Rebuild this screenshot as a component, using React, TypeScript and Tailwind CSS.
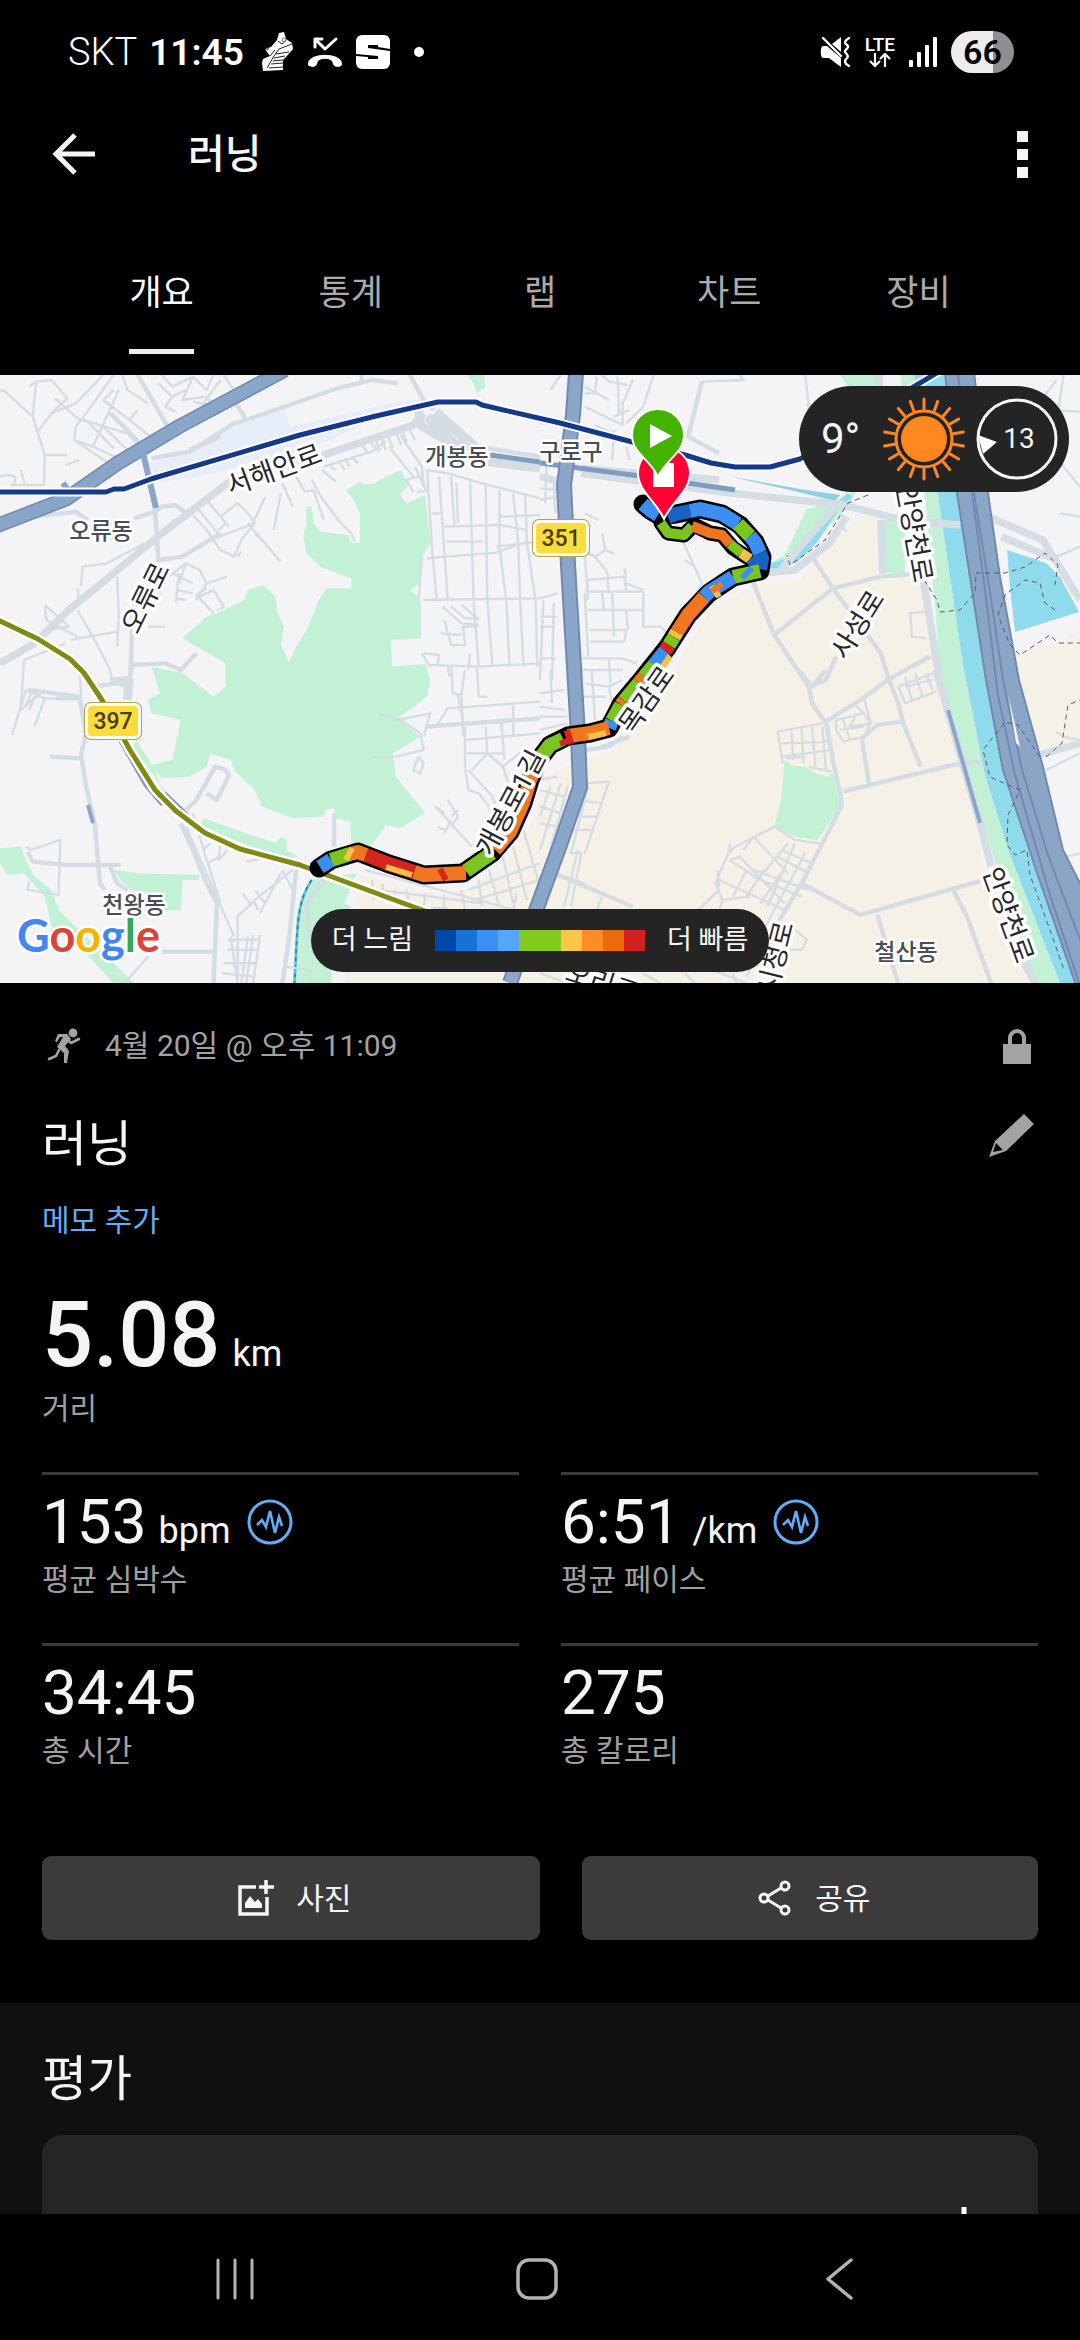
import { useState } from 'react';
import type { ReactNode } from 'react';

const TABS = ['개요', '통계', '랩', '차트', '장비'];

const PACE_SCALE = [
  'bg-[#0047a6]',
  'bg-[#1473d4]',
  'bg-[#3b90f5]',
  'bg-[#55a6ff]',
  'bg-[#82ca1e]',
  'bg-[#82ca1e]',
  'bg-[#fac74b]',
  'bg-[#ff8c26]',
  'bg-[#ed6a0c]',
  'bg-[#d42020]',
];

const BLUE = '#3b8ff2';
const NAVY = '#1763c4';
const GREEN = '#7cc51f';
const YELLOW = '#fbbf45';
const ORANGE = '#f0761f';
const RED = '#d6241f';

const ROUTE =
  'M643 129L650 135L660 141L676 139L700 134L722 139L740 150L755 167L762 182L760 196L733 202L709 218L688 240L667 273L643 303L622 328L609 353L590 358L568 361L550 370L538 386L530 405L523 428L510 457L492 478L463 498L424 500L389 489L358 477L331 485L319 493';
const LOOP = 'M661 148L668 158L684 160L694 150L710 158L722 160L733 173L750 184L757 192';

const ROUTE_SEGMENTS: [string, string][] = [
  [BLUE, 'M643 129L650 135L658 140'],
  [NAVY, 'M668 142L676 139L690 136'],
  [BLUE, 'M690 136L700 134L722 139L738 149'],
  [GREEN, 'M738 149L750 161'],
  [BLUE, 'M750 161L755 167L760 178'],
  [NAVY, 'M760 178L762 184L760 194'],
  [GREEN, 'M760 196L733 202'],
  [BLUE, 'M733 202L709 217L704 222'],
  [ORANGE, 'M704 222L688 240L677 257'],
  [YELLOW, 'M677 257L674 262'],
  [GREEN, 'M674 262L669 270'],
  [RED, 'M669 270L665 276'],
  [BLUE, 'M665 276L654 290'],
  [GREEN, 'M654 290L644 302'],
  [ORANGE, 'M644 302L639 308'],
  [GREEN, 'M639 308L624 326'],
  [ORANGE, 'M624 326L621 330'],
  [GREEN, 'M621 330L612 346'],
  [BLUE, 'M612 346L609 353'],
  [ORANGE, 'M609 353L590 358L568 361'],
  [RED, 'M572 361L566 363'],
  [GREEN, 'M563 364L550 370L538 386'],
  [ORANGE, 'M538 386L530 405L523 428L510 457L495 475'],
  [GREEN, 'M492 478L466 496'],
  [ORANGE, 'M466 498L424 500L414 497'],
  [RED, 'M414 497L389 489L366 480'],
  [ORANGE, 'M366 480L358 477L350 479'],
  [GREEN, 'M350 479L331 485'],
  [BLUE, 'M331 485L320 492'],
];

const LOOP_SEGMENTS: [string, string][] = [
  [GREEN, 'M661 148L668 158L684 160L692 151'],
  [ORANGE, 'M692 151L710 158L722 160L730 169'],
  [GREEN, 'M730 169L741 178'],
  [YELLOW, 'M741 178L750 184'],
  [NAVY, 'M750 184L757 192'],
];

// Return lane of the run, drawn on top of the outbound one
const LANE_SEGMENTS: [string, string][] = [
  [BLUE, 'M752 193L742 203'],
  [YELLOW, 'M712 211L719 222'],
  [ORANGE, 'M722 209L712 216'],
  [YELLOW, 'M670 281L660 296'],
  [ORANGE, 'M660 292L648 308'],
  [YELLOW, 'M606 358L588 362'],
  [RED, 'M572 364L560 369'],
  [YELLOW, 'M412 500L386 492'],
  [RED, 'M446 505L440 494'],
  [YELLOW, 'M352 473L346 485'],
];

const SMALL_ROADS_WEST = [
  'M0 60L15 65L95 140L130 255L128 345M95 140L105 35L85 50M105 35L150 30L195 85L150 130L110 185',
  'M160 85L225 145L370 190L400 225M300 15L220 100L150 130M330 15L250 130L220 170L215 210L330 290',
  'M215 210L270 230L345 60M270 230L345 265M250 150L330 235M300 170L370 240M330 60L300 90L450 210M400 120L375 150',
  'M355 15L370 60L430 100M460 40L500 80L480 110L510 125M470 15L500 50L560 20L530 90L600 80L640 130M500 80L540 60',
  'M560 20L600 60L620 15M0 320L20 315L45 320L42 345M60 300L72 340M128 255L195 255M190 285L230 270M30 345L128 345',
  'M590 100L640 30M560 95L600 105M650 15L690 80',
  'M560 435L600 480L640 540L680 560L700 510L740 460L720 430M570 410L640 500M600 390L665 470M640 440L690 400L720 430',
  'M610 510L740 460M720 460L815 575M740 490L770 520M690 560L700 545M655 460L635 480M770 380L730 470',
  'M815 370L795 480M820 340L850 410M860 320L885 365L910 360L940 450M905 330L935 385L975 440L1000 470L1020 490L1030 515M975 335L935 300M955 410L985 455',
  'M960 290L975 300M985 270L1000 300M1000 265L1015 290M1020 260L1040 280M940 290L1080 245L1120 215M1050 225L1070 250',
  'M1065 205L1100 245M1085 200L1105 240M1105 195L1120 240M1125 190L1140 235M1150 190L1165 225M1170 185L1180 215M1190 180L1205 210',
  'M1200 365L1180 330L1215 320M1205 290L1240 365L1210 365M1130 230L1200 320M1160 190L1205 260L1225 290L1230 350',
  'M1240 300L1255 540L1268 690M1275 320L1290 540L1300 690M1310 320L1320 470M1325 340L1330 460M1365 330L1375 690M1410 340L1415 690M1450 360L1450 530L1470 690M1490 370L1505 520L1510 690M1525 370L1530 520L1555 690',
  'M1255 430L1285 430M1290 470L1450 465L1530 480M1295 515L1400 515M1450 440L1568 435M1440 530L1568 515M1240 565L1300 560L1440 548L1500 525',
  'M1230 690L1568 685M1375 690L1390 890M1415 690L1430 890M1470 690L1480 890M1510 690L1520 890M1555 690L1560 890',
  'M1240 300L1300 310L1400 340L1568 385M1225 560L1215 690M1285 710L1340 760L1390 765M1310 710L1350 745L1390 745M1340 705L1390 750M1290 750L1310 825L1350 825L1345 770L1390 768M1280 790L1340 795',
  'M1225 850L1245 885L1390 890L1568 880M1270 885L1275 855L1230 850M1310 885L1315 970L1340 975L1350 900M1330 975L1345 1060M1365 850L1360 900M1300 890L1305 920M1385 890L1390 980L1415 980',
  'M235 650L240 590L310 580L420 520M340 620L345 740L340 830M130 705L200 770L130 780M225 655L230 700M130 710L135 750L225 800M205 810L340 785M225 720L280 820L320 900L325 930M70 870L190 820M70 870L60 1020L130 960',
  'M490 620L540 580L520 640M500 610L560 640M520 610L510 700M510 660L560 670M510 685L540 690M540 580L580 600L600 640L660 620M570 690L600 640M580 680L620 660L650 710L630 720M600 655L570 675L620 730M440 640L470 640L460 700M430 770L480 770',
  'M75 960L130 985L100 1070M90 970L75 1010M100 980L85 1020M130 985L165 985M75 960L35 1095M232 910L235 980',
  'M1100 1030L1155 1050L1250 1030M1155 1045L1220 1090L1230 1140L1150 1160L1075 1160M1230 1100L1250 1025M1215 1160L1200 1200L1220 1210L1230 1180L1215 1160',
  'M1270 1065L1300 1015L1568 995M1350 1070L1350 1190L1360 1260L1390 1270L1420 1310M1410 1070L1415 1150L1370 1200M1355 1110L1568 1090M1355 1150L1460 1150M1455 1050L1465 1170M1490 1000L1490 1100M1340 980L1345 1100M1415 1150L1460 1190L1480 1250M1360 1200L1430 1280L1440 1310M1460 1190L1520 1140',
  'M1265 1310L1370 1430M1300 1290L1330 1340L1310 1370M1330 1320L1310 1340M1265 1310L1290 1330M1270 1370L1290 1380M1290 1390L1310 1350M560 1330L600 1470M610 1420L590 1440M600 1470L640 1600M640 1420L635 1470L660 1440M540 1370L680 1700M600 1480L640 1460M700 1400L720 1410M715 1475L840 1450',
  'M850 1500L740 1590L690 1640L690 1720M815 1510L755 1630M740 1560L770 1600M705 1570L730 1610M735 1590L750 1620M820 1500L850 1560M780 1440L790 1480M670 1700L690 1840M690 1700L690 1840M720 1700L700 1840M735 1695L715 1840M755 1695L735 1840M660 1710L750 1710M660 1740L745 1740M650 1780L740 1780M645 1810L740 1820',
  'M1060 1500L1568 1640M1080 1530L1085 1590M1110 1540L1115 1595M1145 1560L1150 1600M1180 1560L1190 1610M1235 1570L1230 1620M1290 1575L1290 1620M1340 1560L1350 1620M1390 1530L1400 1610M1420 1500L1450 1610M1460 1460L1490 1600M1490 1430L1530 1590M1520 1380L1568 1550M1100 1560L1400 1600M1360 1560L1568 1480M1380 1590L1568 1530M1380 1800L1568 1780M1240 1615L1300 1615M1500 1570L1490 1620',
  'M830 1790L900 1800L900 1835M370 1830L430 1760M85 1535L80 1560L170 1575L175 1410L90 1440L75 1430',
];

const MID_ROADS_WEST = [
  'M400 15L490 175M405 220L370 180L320 130',
  'M440 265L550 245L680 160L715 150L980 55L1080 30L1155 40M1050 15L1050 35M685 100L715 150',
  'M550 240L640 200',
  'M1190 15L1230 90L1260 120',
  'M100 440L220 425L255 450M390 445L450 425L470 410L510 405L540 430L620 370L670 340M450 425L460 570L530 560L640 490',
  'M460 570L385 720L380 880L375 980M380 885L480 880L525 900L570 850',
  'M380 885L385 900M320 930L370 925L350 950',
  'M270 950L370 935M80 960L230 980L250 1090L235 1155L250 1250L275 1360L290 1540L305 1560M145 1160L240 1165M160 985L230 985',
  'M540 1320L570 1290L625 1190L655 1200L665 1215L630 1290L600 1270M525 1360L560 1440L600 1540L630 1600L620 1840',
  'M80 1445L95 1475L190 1485L350 1485M320 1490L340 1540L370 1560M860 1500L840 1700L820 1840M470 1745L620 1745M970 1330L970 1430',
  'M1235 1070L1568 1045M940 1530L890 1600L900 1710M1270 120L1390 230L1568 260',
];

const SMALL_ROADS_EAST = [
  'M130 110L240 165L240 100L270 30M165 20L160 70L130 70M180 15L200 35L255 45M130 50L200 90M225 20L230 130M215 140L260 120M60 15L30 60',
  'M330 15L300 110L250 160M250 230L260 270M215 180L210 270M160 165L230 200L310 225M360 410L380 410M0 160L50 160M20 250L15 400M0 355L50 360M40 340L45 430M0 390L50 380',
  'M130 430L170 450M180 490L190 540L160 560L130 545M160 560L190 600L200 620M190 540L215 550M130 560L140 680L130 700M140 630L250 620L245 595M245 620L250 660M195 620L200 670M130 665L300 665L300 770',
  'M0 685L50 670M10 690L0 930M40 700L35 930M0 740L50 740M0 770L45 770M0 865L45 865M130 670L140 860M140 720L300 720M180 665L185 720M210 670L215 800M145 780L250 780M250 720L255 780M145 815L245 815L250 780',
  'M295 770L350 770L370 790M100 865L240 865L280 880M110 900L240 900M200 870L205 940M0 970L70 960M0 1010L70 1020M30 900L35 1000M0 1040L80 1040M0 1080L80 1060M130 940L200 950L240 930M120 980L190 980M150 900L160 1050M200 950L215 1020L180 1050',
  'M400 480L470 640L380 800M420 570L450 590M250 640L300 660',
  'M580 15L590 30L470 35M770 15L780 100M1440 120L1568 125M1450 200L1568 350M1500 160L1520 15M870 460L890 485',
  'M1075 730L1080 800L1120 805M1070 730L1120 725M1140 860L1010 930',
  'M690 1085L820 1060M690 1085L705 1180M730 1080L735 1170M760 1075L765 1180M790 1070L800 1190M820 1070L830 1200M700 1120L840 1115M705 1160L845 1140M780 1190L845 1205M715 1165L770 1160',
  'M860 1050L940 1030L960 1060L940 1100L880 1115L860 1080L860 1050M880 1050L900 1110M920 1030L900 1070L960 1060M870 1080L940 1070M910 1000L940 1030M940 980L960 1060',
  'M1040 950L1140 910M1060 1000L1150 965M1060 920L1080 990M1090 910L1110 980M1120 910L1140 960M1040 950L1060 1000M1060 950L1140 930',
  'M550 1440L680 1370L740 1410L810 1420M550 1440L510 1540L530 1590L520 1620M555 1470L580 1460L710 1600M590 1440L620 1400L720 1510M620 1500L780 1560M550 1470L640 1530L760 1580M520 1530L710 1620M640 1520L720 1420M600 1580L650 1500M640 1600L700 1510M680 1620L770 1450M560 1580L600 1500M700 1440L790 1480M690 1460L780 1510M740 1420L660 1610M515 1500L520 1550M550 1420L555 1450M530 1590L610 1580M460 1620L520 1560',
  'M130 1240L200 1235L130 1450M110 1290L180 1300M100 1340L170 1340M90 1380L150 1380M140 1250L90 1450M30 1250L0 1340M60 1240L0 1440M80 1250L30 1440M0 1260L70 1280M0 1310L60 1330M0 1360L50 1370M50 1220L0 1230M110 1440L70 1610M85 1450L120 1450L90 1610M180 1580L165 1620M70 1520L130 1540',
  'M730 1670L775 1710L760 1740L700 1740M680 1620L650 1680M500 1800L600 1840M300 1810L350 1840M420 1810L450 1840M0 1810L80 1840M560 1810L570 1840M640 1740L600 1820',
  'M1500 1085L1520 1100L1568 1110M1470 1200L1568 1150M1530 1460L1568 1450M1500 560L1568 530M1440 110L1500 30M1510 430L1568 440',
];

const MID_ROADS_EAST = [
  'M470 35L430 200L520 250M780 100L790 150',
  'M620 640L680 795L780 950L788 990L790 1000L830 1060M680 795L850 655L790 560M850 655L990 850L1010 920L1040 1000L1055 1060L1105 1190',
  'M830 1055L930 990L1010 930L1130 860M860 860L830 930L785 950M990 620L850 655M990 620L1110 610M750 900L790 950L830 900',
  'M830 1055L850 1170L875 1290L875 1310L830 1400L760 1540L690 1660L640 1800M930 1110L980 1065L1050 1055M935 1110L955 1240',
  'M880 1265L1200 1185L1280 1175M760 1540L930 1635L1290 1530M980 1635L1010 1740L1040 1840M1200 1560L1240 1640L1310 1840',
  'M40 1510L270 1610M170 1135L260 1100M100 1145L200 1130L240 1100',
];

const MINOR_RAMPS = [
  'M0 320L55 335M120 310L560 370L880 405L1050 450L1220 465M120 295L520 330',
  'M1150 900L1280 1370L1310 1490M1400 1770L1440 1840M1110 610L1140 800L1160 930',
  'M700 600L780 500L860 410M640 610L740 600L840 520L890 440',
  'M1300 440L1460 510L1568 690M1340 500L1500 570M1450 1155L1568 1120M985 15L990 340M990 450L995 610',
];

type MapLabelProps = {
  x: number;
  y: number;
  angle?: number;
  area?: boolean;
  children: string;
};

function MapLabel({ x, y, angle = 0, area, children }: MapLabelProps) {
  return (
    <text
      x={x}
      y={y}
      transform={`rotate(${angle} ${x} ${y})`}
      textAnchor="middle"
      dominantBaseline="central"
      stroke="#ffffff"
      strokeWidth={area ? 5 : 7}
      strokeLinejoin="round"
      paintOrder="stroke"
      className={area ? 'fill-[#4a4d52] text-[23px] font-medium' : 'fill-[#25272b] text-[27px]'}
    >
      {children}
    </text>
  );
}

function RoadShield({ x, y, children }: { x: number; y: number; children: string }) {
  return (
    <g>
      <rect x={x - 29} y={y - 19} width="58" height="38" rx="7" fill="#b3a154" />
      <rect x={x - 28} y={y - 18} width="56" height="36" rx="6" fill="#fffdf0" />
      <rect x={x - 25} y={y - 15} width="50" height="30" rx="4" fill="#fddc3c" />
      <text x={x} y={y + 8} textAnchor="middle" className="fill-[#453f14] text-[23px] font-medium">
        {children}
      </text>
    </g>
  );
}

function RouteMap() {
  return (
    <svg viewBox="0 0 1080 608" className="block h-auto w-full" role="img" aria-label="경로 지도">
      <rect width="1080" height="608" fill="#f4f3f5" />

      {/* built-up area between the road and the stream */}
      <path
        fill="#f5f1e6"
        d="M871 138L840 160L800 205L755 212L712 232L680 285L655 335L610 378L585 383L548 400L530 450L505 490L465 515L424 517L360 500L345 608L1040 608L984 492L941 305L929 272L922 208L881 195L879 142Z"
      />
      <path fill="#f5f1e6" d="M1080 255L1050 272L1015 280L1020 300L1042 378L1080 368Z" />

      <g transform="matrix(.3444 0 0 .3333 0 -5)">
        <path
          fill="#c2f1d6"
          d="M1005 360L1045 335L1060 345L1090 340L1120 320L1165 300L1185 345L1160 375L1180 400L1235 375L1250 520L1225 560L1222 640L1190 660L1222 690L1222 805L1135 810L1138 890L1235 882L1250 930L1240 980L1155 1045L1220 1100L1140 1150L1150 1220L1235 1330L1160 1375L1120 1365L1090 1410L1075 1430L1020 1430L1018 1355L975 1345L970 1315L945 1320L940 1340L850 1345L760 1310L740 1260L680 1200L670 1170L610 1150L600 1190L550 1220L470 1225L440 1185L500 1170L525 1050L440 1030L430 990L465 970L440 890L530 910L620 980L655 950L655 880L530 805L600 740L630 730L710 690L720 660L765 645L800 680L805 725L825 770L815 820L838 880L860 830L890 780L915 720L925 690L950 655L1020 655L1020 625L930 590L890 550L880 500L890 460L888 410L905 410L910 460L930 485L1010 495L1020 518L1045 518L1045 430L1030 395Z"
        />
        <path
          fill="#c2f1d6"
          d="M1355 15L1405 15L1410 50L1385 70L1375 40ZM0 1435L60 1430L75 1470L100 1520L150 1560L170 1620L390 1840L330 1840L240 1740L150 1670L130 1580L70 1510L20 1515L0 1480ZM330 1500L400 1510L580 1515L575 1530L530 1530L525 1620L470 1620L440 1570L380 1560L350 1530ZM590 1345L800 1420L815 1400L835 1410L830 1440L865 1460L820 1470L580 1365ZM395 1110L450 1200L470 1260L500 1300L545 1330L470 1250L385 1130ZM900 1530L1035 1510L1000 1600L1020 1610L870 1840L860 1840L865 1640ZM860 1640L990 1600L960 1840L855 1840Z"
        />
        <path
          fill="#e8edfa"
          d="M550 245L680 165L830 115L840 170L1180 90L1230 90L1040 150L1050 170L920 225L720 290L460 340L450 310L420 280Z"
        />
        <path fill="none" stroke="#57c6dd" strokeWidth="8" d="M905 1530C860 1600 865 1660 855 1840" />
        <path fill="none" stroke="#51789c" strokeWidth="5" strokeDasharray="12 12" d="M905 1530C860 1600 865 1660 855 1840" />
      </g>

      {/* stream and its banks */}
      <path fill="#c2f1d6" d="M840 0H880L886 50L850 130L800 180L784 195L770 197L768 190L785 180L806 135L850 120Z" />
      <path fill="#f4f3f5" d="M840 0L800 0L800 118L840 118L880 60Z" />
      <path fill="#c2f1d6" d="M884 145H905V198H884Z" />
      <path
        fill="#c2f1d6"
        d="M841 0H925L938 120L963 290L985 400L1010 480L1060 608H1036L1010 540L990 470L960 380L941 305L935 230L925 120L900 0Z"
      />
      <path fill="#90daee" d="M914 0H946L958 120L986 290L1004 400L1030 480L1076 608H1060L1010 480L985 400L963 290L938 120Z" />
      <path fill="#90daee" d="M1007 175L1046 188L1060 202L1079 237L1015 257L1010 212Z" />
      <path fill="none" stroke="#90daee" strokeWidth="6" d="M768 192L795 185L815 165L838 130L850 120" />
      <path fill="#90cfe0" d="M728 101L800 114L840 120L835 126L790 115Z" />

      <g transform="matrix(.3444 0 0 .3333 540 -5)">
        <path
          fill="#c2f1d6"
          d="M710 1170L730 1185L770 1190L800 1210L835 1220L850 1210L870 1300L865 1320L805 1410L740 1400L680 1370L700 1290Z"
        />
      </g>

      <g transform="matrix(.3444 0 0 .3333 0 -5)" fill="none" stroke="#d4dde4" strokeLinejoin="round">
        <g strokeWidth="7">
          {SMALL_ROADS_WEST.map((d) => (
            <path key={d} d={d} />
          ))}
        </g>
        <g strokeWidth="13">
          {MID_ROADS_WEST.map((d) => (
            <path key={d} d={d} />
          ))}
        </g>
        <path strokeWidth="22" d="M0 880L100 820L200 720L330 610L470 490L560 420L660 340L940 255L1200 165L1230 130" />
        <path strokeWidth="26" d="M1215 110L1220 165L1300 215L1400 240M1240 140L1330 230M1260 130L1360 215M1370 270L1568 295M375 925L370 990" />
      </g>

      <g transform="matrix(.3444 0 0 .3333 540 -5)" fill="none" stroke="#d4dde4" strokeLinejoin="round">
        <g strokeWidth="7">
          {SMALL_ROADS_EAST.map((d) => (
            <path key={d} d={d} />
          ))}
        </g>
        <g strokeWidth="13">
          {MID_ROADS_EAST.map((d) => (
            <path key={d} d={d} />
          ))}
        </g>
        <g strokeWidth="22" stroke="#d6dee5">
          {MINOR_RAMPS.map((d) => (
            <path key={d} d={d} />
          ))}
        </g>
      </g>

      {/* highways */}
      <g fill="none" strokeLinejoin="round">
        <path stroke="#7089b3" strokeWidth="15" d="M-4 151L66 124L118 88L180 51L285 -5" />
        <path stroke="#89a6c8" strokeWidth="12" d="M-4 151L66 124L118 88L180 51L285 -5" />
        <path stroke="#89a6c8" strokeWidth="6" d="M143 78L156 133M63 108L70 118" />
        <path stroke="#7f9cc2" strokeWidth="5" d="M490 80L540 87M540 88L640 101L735 115" />
        <path stroke="#7089b3" strokeWidth="16" d="M576 -2L573 40L564 110L568 190L578 360L580 412L560 470L538 530L510 608" />
        <path stroke="#8ba6c8" strokeWidth="12" d="M576 -2L573 40L564 110L568 190L578 360L580 412L560 470L538 530L510 608" />
        <path stroke="#8ba6c8" strokeWidth="4" d="M948 335L980 448M88 430L93 448" />
        <path stroke="#7e94bb" strokeWidth="3" d="M120 366L145 410L162 430M165 418L188 440" />
      </g>
      <path
        fill="#8ba5c6"
        stroke="#7089b3"
        strokeWidth="2"
        d="M945 -3L957 118L986 305L1003 395L1036 495L1076 610H1082V512L1063 475L1043 392L1019 305L1000 202L988 118L974 -3Z"
      />
      <path
        fill="none"
        stroke="#7289b3"
        strokeWidth="2"
        d="M958 0L974 118L992 230L1003 305L1022 395L1048 480L1082 570M972 118L985 215L998 320L1015 400L1050 520L1079 608"
      />
      <path fill="#f4f3f5" d="M1008 320L1014 345L1020 372L1016 368Z" />
      <path
        fill="none"
        stroke="#575d66"
        strokeWidth="1"
        strokeDasharray="5 4"
        d="M868 120L848 128L825 165L790 190L787 180M924 205L937 225L940 237L960 235L975 218L976 198L1005 198L1025 192L1045 178L1058 190L1055 210M1055 235L1045 228L1040 208L1025 205L1005 220L998 240L1010 270L1020 280L1050 260L1058 268L1080 268M1046 382L1062 368L1068 330L1080 325M1040 382L1018 350L1005 347L983 375L990 402L1020 415L1008 440L1007 470L1015 480L1027 475L1030 500L1050 555L1064 595"
      />

      {/* rail lines */}
      <g fill="none" strokeLinejoin="round">
        <path
          stroke="#ffffff"
          strokeWidth="9"
          d="M0 117H106L114 114H124L151 104L300 60L376 41L438 27H476L482 30L560 48L640 69L685 80L711 88L735 92H770L800 84L900 20L950 -10"
        />
        <path
          stroke="#15398a"
          strokeWidth="5"
          d="M0 117H106L114 114H124L151 104L300 60L376 41L438 27H476L482 30L560 48L640 69L685 80L711 88L735 92H770L800 84L900 20L950 -10"
        />
        <path
          stroke="#ffffff"
          strokeWidth="10"
          d="M-4 244L38 264L70 284L84 298L102 325L130 375L155 415L176 436L205 458L240 474L300 490L400 527L450 545"
        />
        <path
          stroke="#7f8a12"
          strokeWidth="5"
          d="M-4 244L38 264L70 284L84 298L102 325L130 375L155 415L176 436L205 458L240 474L300 490L400 527L450 545"
        />
      </g>

      {/* recorded route, coloured by pace */}
      <g fill="none" strokeLinejoin="round">
        <g stroke="#000000" strokeLinecap="round">
          <path d={ROUTE} strokeWidth="19" />
          <path d={LOOP} strokeWidth="15" />
        </g>
        <g strokeWidth="10">
          {LOOP_SEGMENTS.map(([color, d]) => (
            <path key={d} d={d} stroke={color} />
          ))}
        </g>
        <g strokeWidth="14">
          {ROUTE_SEGMENTS.map(([color, d]) => (
            <path key={d} d={d} stroke={color} />
          ))}
        </g>
        <g strokeWidth="6">
          {LANE_SEGMENTS.map(([color, d]) => (
            <path key={d} d={d} stroke={color} />
          ))}
        </g>
      </g>

      <MapLabel x={274} y={95} angle={-20}>서해안로</MapLabel>
      <MapLabel x={146} y={223} angle={-64}>오류로</MapLabel>
      <MapLabel x={511} y={428} angle={-62}>개봉로1길</MapLabel>
      <MapLabel x={647} y={325} angle={-55}>목감로</MapLabel>
      <MapLabel x={858} y={250} angle={-58}>사성로</MapLabel>
      <MapLabel x={914} y={158} angle={80}>안양천로</MapLabel>
      <MapLabel x={1008} y={540} angle={70}>안양천로</MapLabel>
      <MapLabel x={776} y={583} angle={-76}>시청로</MapLabel>
      <MapLabel x={602} y={608} angle={18}>오리로</MapLabel>
      <MapLabel x={457} y={82} area>개봉동</MapLabel>
      <MapLabel x={571} y={77} area>구로구</MapLabel>
      <MapLabel x={101} y={156} area>오류동</MapLabel>
      <MapLabel x={134} y={530} area>천왕동</MapLabel>
      <MapLabel x={906} y={577} area>철산동</MapLabel>
      <RoadShield x={113} y={346}>397</RoadShield>
      <RoadShield x={561} y={163}>351</RoadShield>

      {/* finish and start pins */}
      <path
        fill="#ff0033"
        stroke="#ffffff"
        strokeWidth="2"
        d="M664 144C656 126 638 116 638 98A26 26 0 0 1 690 98C690 116 672 126 664 144Z"
      />
      <path fill="#ffffff" d="M653 88H674V112H653Z" />
      <path
        fill="#43b300"
        stroke="#ffffff"
        strokeWidth="2"
        d="M658 102C650 84 632 78 632 60A26 26 0 0 1 684 60C684 78 666 84 658 102Z"
      />
      <path fill="#ffffff" d="M650 49L672 61L650 73Z" />

      <text
        x="17"
        y="577"
        stroke="#ffffff"
        strokeWidth="5"
        strokeLinejoin="round"
        paintOrder="stroke"
        className="font-['Lato',sans-serif] text-[45px] font-bold"
      >
        <tspan fill="#4285f4">G</tspan>
        <tspan fill="#db4437">o</tspan>
        <tspan fill="#f4b400">o</tspan>
        <tspan fill="#4285f4">g</tspan>
        <tspan fill="#34a853">l</tspan>
        <tspan fill="#db4437">e</tspan>
      </text>
    </svg>
  );
}

function SunIcon() {
  return (
    <svg width="86" height="86" viewBox="-43 -43 86 86" stroke="#ff871f" strokeWidth="3" strokeLinecap="round">
      <circle r="23" fill="#ff871f" stroke="none" />
      <circle r="28" fill="none" />
      {Array.from({ length: 18 }, (_, i) => (
        <path key={i} d="M0 -30V-40" transform={`rotate(${i * 20})`} />
      ))}
    </svg>
  );
}

function WeatherPill() {
  return (
    <div className="absolute top-[11px] right-[11px] flex h-[106px] items-center rounded-full bg-[#242424] pr-[11px] pl-[22px] text-[#f5f5f5]">
      <span className="w-[60px] text-[42px] leading-none">9°</span>
      <SunIcon />
      <div className="relative ml-[9px] flex size-[82px] items-center justify-center">
        <svg className="absolute inset-0" width="82" height="82" viewBox="0 0 82 82">
          <circle cx="41" cy="41" r="39" fill="none" stroke="#f5f5f5" strokeWidth="3" />
          <path d="M2 37L21 44L7 56Z" fill="#ffffff" />
        </svg>
        <span className="pl-1 text-[28px] leading-none">13</span>
      </div>
    </div>
  );
}

function PaceLegend() {
  return (
    <div className="absolute inset-x-0 bottom-[11px] flex justify-center">
      <div className="flex h-[63px] items-center gap-[22px] rounded-full bg-[#242424] px-[21px] text-[27px] text-[#f5f5f5]">
        <span>더 느림</span>
        <div className="flex">
          {PACE_SCALE.map((color, i) => (
            <span key={i} className={`size-[21px] ${color}`} />
          ))}
        </div>
        <span>더 빠름</span>
      </div>
    </div>
  );
}

function StatusBar() {
  return (
    <div className="flex h-[104px] shrink-0 items-center justify-between pr-[66px] pl-[68px] text-white">
      <div className="flex items-center gap-3">
        <span className="text-[38px] leading-none font-light">SKT</span>
        <span className="text-[37px] leading-none font-semibold">11:45</span>
        <div className="ml-[6px] flex items-center gap-[13px]">
          <svg width="32" height="40" viewBox="0 0 32 40">
            <path fill="#ffffff" d="M17 1L22 0L24 7L30 11L31 17L24 25L21 28L21 38L1 39L0 31L1 27L8 24L5 20L3 17L9 15L15 8Z" />
            <path fill="none" stroke="#222222" d="M5 36L12 24L17 17L30 12M14 22L27 20M12 26L23 24M11 29L21 28M9 32L21 31M7 36L21 35M16 9L20 12L24 8M3 17L7 17M8 24L13 18" />
            <circle cx="22" cy="8" r="2" fill="none" stroke="#777777" />
          </svg>
          <svg width="36" height="32" viewBox="0 0 36 32">
            <path fill="none" stroke="#ffffff" strokeWidth="3" strokeLinecap="round" strokeLinejoin="round" d="M8 11V3H15M8 3L18 13L29 3" />
            <path fill="#ffffff" d="M1 27C3 16 33 16 35 27C36 32 27 32 26 28L25 25C21 22 15 22 11 25L10 28C9 32 0 32 1 27Z" />
          </svg>
          <svg width="34" height="34" viewBox="0 0 34 34">
            <rect width="34" height="34" rx="6" fill="#ffffff" />
            <path fill="#000000" d="M12 10H22V12L34 14V16L12 13ZM0 19L22 21V24H12V22L0 21Z" />
          </svg>
        </div>
        <span className="ml-3 size-[10px] rounded-full bg-white" />
      </div>

      <div className="flex items-center gap-[14px]">
        <svg width="32" height="32" viewBox="0 0 32 32">
          <path fill="#ffffff" d="M4 10H8L22 22V31L10 22H4C1 22 1 10 4 10ZM13 8L22 1V16Z" />
          <path fill="none" stroke="#ffffff" strokeWidth="2.4" strokeLinecap="round" d="M4 2L22 20M30 2C25 5 25 7 28 9C31 11 27 13 26 15C25 17 31 19 28 22C25 25 25 27 30 30" />
        </svg>
        <div className="flex flex-col items-center">
          <span className="text-[19px] leading-4 font-medium">LTE</span>
          <svg width="24" height="15" viewBox="0 0 24 15" fill="none" stroke="#ffffff" strokeWidth="2.2">
            <path d="M7 0V12M2 8L7 13L12 8M17 14V2M12 6L17 1L22 6" />
          </svg>
        </div>
        <svg width="28" height="30" viewBox="0 0 28 30" fill="#ffffff">
          <rect y="23" width="4" height="7" rx="1" />
          <rect x="8" y="15" width="4" height="15" rx="1" />
          <rect x="16" y="8" width="4" height="22" rx="1" />
          <rect x="24" width="4" height="30" rx="1" />
        </svg>
        <span className="flex h-[42px] w-[63px] items-center justify-center rounded-full bg-linear-to-r from-[#ededed] from-66% to-[#8f8f8f] to-66% text-[34px] leading-none font-semibold text-black">
          66
        </span>
      </div>
    </div>
  );
}

function Header() {
  return (
    <header className="flex h-[100px] shrink-0 items-center pr-[46px] pl-[48px] text-[#f5f5f5]">
      <button type="button" aria-label="뒤로" className="w-[140px]">
        <svg width="48" height="48" viewBox="0 0 48 48" fill="none" stroke="currentColor" strokeWidth="5">
          <path d="M47 24H8M27 5L8 24L27 43" />
        </svg>
      </button>
      <h1 className="flex-1 pt-[2px] text-[40px] leading-none font-medium">러닝</h1>
      <button type="button" aria-label="더보기" className="flex flex-col gap-[7px] px-[6px]">
        <span className="size-[11px] bg-current" />
        <span className="size-[11px] bg-current" />
        <span className="size-[11px] bg-current" />
      </button>
    </header>
  );
}

function Tabs() {
  const [active, setActive] = useState('개요');
  return (
    <nav className="grid h-[171px] shrink-0 grid-cols-5 items-end px-[67px] pb-[21px]">
      {TABS.map((tab) => (
        <button key={tab} type="button" onClick={() => setActive(tab)} className="flex justify-center">
          <span
            className={`border-b-[5px] pb-[35px] text-[35px] leading-10 ${
              tab === active ? 'border-[#f0f0f0] text-white' : 'border-transparent text-[#ababab]'
            }`}
          >
            {tab}
          </span>
        </button>
      ))}
    </nav>
  );
}

function PulseIcon() {
  return (
    <svg width="46" height="46" viewBox="0 0 46 46" fill="none" stroke="#62abf5">
      <circle cx="23" cy="23" r="21" strokeWidth="3" />
      <path strokeWidth="2.6" d="M10 26L15 21L19 28L23 12L28 34L32 18L35 27" />
    </svg>
  );
}

type StatProps = {
  value: string;
  unit?: string;
  label: string;
  pulse?: boolean;
};

function Stat({ value, unit, label, pulse }: StatProps) {
  return (
    <div className="border-t-[3px] border-[#3a3a3a] pt-[11px] pb-[43px]">
      <div className="flex items-center">
        <p className="text-[62px] leading-[72px] text-[#f5f5f5]">
          {value}
          {unit && <span className="ml-3 text-[36px] leading-none">{unit}</span>}
        </p>
        {pulse && (
          <button type="button" aria-label={`${label} 차트`} className="ml-4">
            <PulseIcon />
          </button>
        )}
      </div>
      <p className="mt-[2px] text-[30px] leading-10 text-[#a0a0a0]">{label}</p>
    </div>
  );
}

function ActionButton({ icon, children }: { icon: ReactNode; children: string }) {
  return (
    <button
      type="button"
      className="flex h-[84px] items-center justify-center gap-[22px] rounded-[9px] bg-[#3b3b3b] pl-2 text-[30px] text-[#f5f5f5]"
    >
      {icon}
      {children}
    </button>
  );
}

function ActivitySummary() {
  return (
    <section className="px-[42px] pt-[43px] pb-[63px]">
      <div className="flex h-10 items-center text-[#a3a3a3]">
        <svg width="42" height="40" viewBox="0 0 42 40" fill="none" stroke="currentColor" strokeLinejoin="round">
          <circle cx="31" cy="7" r="4.4" fill="currentColor" stroke="none" />
          <path fill="currentColor" stroke="none" d="M16 8L25 8L29 13L23 20L27 25L25 37L22 37L22 27L15 21L21 11L18 11L15 16L13 15Z" />
          <path strokeWidth="2.6" strokeLinecap="round" d="M26 14L29 17L37 13M17 24L14 30L7 33" />
        </svg>
        <p className="ml-[21px] flex-1 text-[30px] leading-10">4월 20일 @ 오후 11:09</p>
        <svg className="mr-[7px]" width="28" height="36" viewBox="0 0 28 36">
          <path fill="none" stroke="currentColor" strokeWidth="4" d="M7 16V10A7 7 0 0 1 21 10V16" />
          <rect y="16" width="28" height="20" fill="currentColor" />
        </svg>
      </div>

      <div className="mt-[47px] flex items-start justify-between">
        <h2 className="text-[49px] leading-[64px] text-[#f5f5f5]">러닝</h2>
        <button type="button" aria-label="편집" className="mr-1 text-[#a3a3a3]">
          <svg width="46" height="46" viewBox="0 0 46 46">
            <path fill="currentColor" d="M36 1L46 11L18 38L1 44L7 28ZM8 30L5 39L15 37Z" fillRule="evenodd" />
          </svg>
        </button>
      </div>

      <a href="#memo" className="mt-6 block text-[30px] leading-10 text-[#62abf5]">
        메모 추가
      </a>

      <p className="mt-[47px] text-[90px] leading-[96px] font-medium text-[#f5f5f5]">
        5.08<span className="ml-3 text-[36px] leading-none font-normal">km</span>
      </p>
      <p className="mt-[5px] text-[30px] leading-10 text-[#a0a0a0]">거리</p>

      <div className="mt-[43px] grid grid-cols-2 gap-x-[42px]">
        <Stat value="153" unit="bpm" label="평균 심박수" pulse />
        <Stat value="6:51" unit="/km" label="평균 페이스" pulse />
        <Stat value="34:45" label="총 시간" />
        <Stat value="275" label="총 칼로리" />
      </div>

      <div className="mt-[42px] grid grid-cols-[12fr_11fr] gap-[42px]">
        <ActionButton
          icon={
            <svg width="36" height="36" viewBox="0 0 36 36" fill="none" stroke="currentColor">
              <path strokeWidth="3.5" d="M18 7H2V34H29V17M28 0V14M21 7H36" />
              <path fill="currentColor" stroke="none" d="M7 28V23L12 16L17 22L20 19L24 24V28Z" />
            </svg>
          }
        >
          사진
        </ActionButton>
        <ActionButton
          icon={
            <svg width="36" height="36" viewBox="0 0 36 36" fill="none" stroke="currentColor" strokeWidth="3">
              <circle cx="7" cy="18" r="4" />
              <circle cx="28" cy="6" r="4" />
              <circle cx="28" cy="30" r="4" />
              <path d="M11 16L24 8M11 20L24 28" />
            </svg>
          }
        >
          공유
        </ActionButton>
      </div>
    </section>
  );
}

function Evaluation() {
  return (
    <section className="bg-[#101010] px-[42px] pt-[45px] pb-12">
      <h2 className="text-[49px] leading-[64px] text-[#f5f5f5]">평가</h2>
      <div className="mt-[23px] flex justify-end rounded-[20px] bg-[#252525] px-[52px] py-[72px]">
        <button type="button" aria-label="평가 추가" className="text-white">
          <svg width="44" height="44" viewBox="0 0 44 44" fill="none" stroke="currentColor" strokeWidth="5">
            <path d="M22 0V44M0 22H44" />
          </svg>
        </button>
      </div>
    </section>
  );
}

function SystemNav() {
  return (
    <nav className="grid h-[126px] shrink-0 grid-cols-3 items-center justify-items-center bg-black pt-1 pr-[90px] pl-[84px] text-[#b3b3b3]">
      <button type="button" aria-label="최근 앱">
        <svg width="42" height="42" viewBox="0 0 42 42" stroke="currentColor" strokeWidth="3" strokeLinecap="round">
          <path d="M4 2V40M21 2V40M38 2V40" />
        </svg>
      </button>
      <button type="button" aria-label="홈">
        <svg width="44" height="44" viewBox="0 0 44 44" fill="none" stroke="currentColor" strokeWidth="3.5">
          <rect x="3" y="3" width="38" height="38" rx="11" />
        </svg>
      </button>
      <button type="button" aria-label="이전">
        <svg width="44" height="44" viewBox="0 0 44 44" fill="none" stroke="currentColor" strokeWidth="3.5" strokeLinecap="round" strokeLinejoin="round">
          <path d="M34 3L11 22L34 41" />
        </svg>
      </button>
    </nav>
  );
}

export default function App() {
  return (
    <div className="flex h-screen flex-col bg-black font-['Roboto','Noto_Sans_CJK_KR',sans-serif]">
      <StatusBar />
      <Header />
      <Tabs />
      <main className="min-h-0 flex-1 overflow-hidden">
        <div className="relative">
          <RouteMap />
          <WeatherPill />
          <PaceLegend />
        </div>
        <ActivitySummary />
        <Evaluation />
      </main>
      <SystemNav />
    </div>
  );
}
